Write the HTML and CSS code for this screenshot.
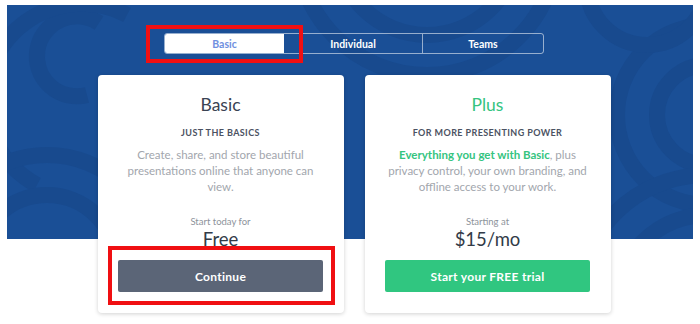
FILE: index.html
```html
<!DOCTYPE html>
<html lang="en">
<head>
    <meta charset="UTF-8">
    <meta name="viewport" content="width=device-width, initial-scale=1.0">
    <title>Plans</title>
    <link rel="stylesheet" href="styles.css">
</head>
<body>

<div class="page">
    <div class="hero">
        <svg class="swirls" width="686" height="234" viewBox="0 0 686 234">
            <g fill="none" stroke="#184a8e" stroke-width="16">
                <path d="M 92 18 A 40 40 0 1 0 80 90"/>
                <path d="M 120 10 A 80 80 0 0 0 30 180"/>
                <circle cx="40" cy="260" r="70"/>
                <circle cx="40" cy="260" r="110"/>
                <circle cx="420" cy="-60" r="90"/>
                <circle cx="420" cy="-60" r="130"/>
                <circle cx="700" cy="110" r="50"/>
                <circle cx="700" cy="110" r="90"/>
                <circle cx="700" cy="300" r="90"/>
                <circle cx="700" cy="300" r="130"/>
                <circle cx="640" cy="-20" r="60"/>
            </g>
        </svg>
        <div class="tabs">
            <div class="tab active">Basic</div>
            <div class="tab middle">Individual</div>
            <div class="tab last">Teams</div>
        </div>
    </div>

    <div class="cards">
        <div class="card">
            <div class="card-title">Basic</div>
            <div class="card-sub">JUST THE BASICS</div>
            <p class="card-desc">Create, share, and store beautiful presentations online that anyone can view.</p>
            <div class="price-label">Start today for</div>
            <div class="price">Free</div>
            <button class="btn btn-gray">Continue</button>
        </div>
        <div class="card">
            <div class="card-title green">Plus</div>
            <div class="card-sub">FOR MORE PRESENTING POWER</div>
            <p class="card-desc"><b class="green">Everything you get with Basic</b>, plus privacy control, your own branding, and offline access to your work.</p>
            <div class="price-label">Starting at</div>
            <div class="price">$15/mo</div>
            <button class="btn btn-green">Start your FREE trial</button>
        </div>
    </div>

    <div class="mark mark-tab"></div>
    <div class="mark mark-btn"></div>
</div>

</body>
</html>
```

FILE: styles.css
```css
body {
    margin: 0;
    background: #fff;
    font-family: Lato, "Liberation Sans", sans-serif;
}
.page {
    position: relative;
    padding: 5px 7px;
}
.hero {
    position: relative;
    height: 234px;
    background-color: #1a4f96;
    overflow: hidden;
    padding-top: 28px;
    box-sizing: border-box;
}
.swirls {
    position: absolute;
    top: 0;
    left: 0;
}
.tabs {
    position: relative;
    display: flex;
    width: 380px;
    height: 21px;
    margin-left: 157px;
    border: 1px solid rgba(255, 255, 255, 0.55);
    border-radius: 3px;
    box-sizing: border-box;
}
.tab {
    display: flex;
    align-items: center;
    justify-content: center;
    color: #fff;
    font-size: 10.5px;
    font-weight: bold;
}
.tab.active {
    width: 119px;
    background: #fff;
    color: #6f8fe0;
    border-radius: 2px 0 0 2px;
}
.tab.middle {
    width: 138px;
    border-right: 1px solid rgba(255, 255, 255, 0.55);
}
.tab.last {
    flex: 1;
}
.cards {
    position: relative;
    display: flex;
    gap: 21px;
    margin-top: -164px;
    padding-left: 91px;
}
.card {
    width: 246px;
    padding: 20px 21px 21px 20px;
    box-sizing: border-box;
    background: #fff;
    border-radius: 4px;
    box-shadow: 0 1px 4px rgba(0, 0, 0, 0.18);
    text-align: center;
}
.card-title {
    font-size: 17.5px;
    line-height: 20px;
    color: #3a4353;
}
.card-sub {
    margin-top: 11px;
    font-size: 9px;
    line-height: 14px;
    font-weight: bold;
    letter-spacing: 0.4px;
    color: #4b5262;
}
.card-desc {
    margin: 7px 0 0;
    font-size: 11.5px;
    line-height: 16px;
    color: #a2a6ad;
}
.green {
    color: #35c47f;
}
.price-label {
    margin-top: 20px;
    font-size: 9.5px;
    line-height: 14px;
    color: #8d939b;
}
.price {
    font-size: 18.5px;
    line-height: 20px;
    color: #323b48;
}
.btn {
    display: block;
    width: 100%;
    height: 32px;
    margin-top: 11px;
    border: none;
    border-radius: 2px;
    color: #fff;
    font-family: inherit;
    font-size: 12px;
    font-weight: bold;
    letter-spacing: 0.3px;
}
.btn-gray {
    background: #5b6577;
}
.btn-green {
    background: #30c680;
}
/* red annotation boxes */
.mark {
    position: absolute;
    border: 4px solid #f00f12;
    box-sizing: border-box;
}
.mark-tab {
    left: 146px;
    top: 25px;
    width: 157px;
    height: 38px;
}
.mark-btn {
    left: 108px;
    top: 246px;
    width: 227px;
    height: 59px;
}
```
